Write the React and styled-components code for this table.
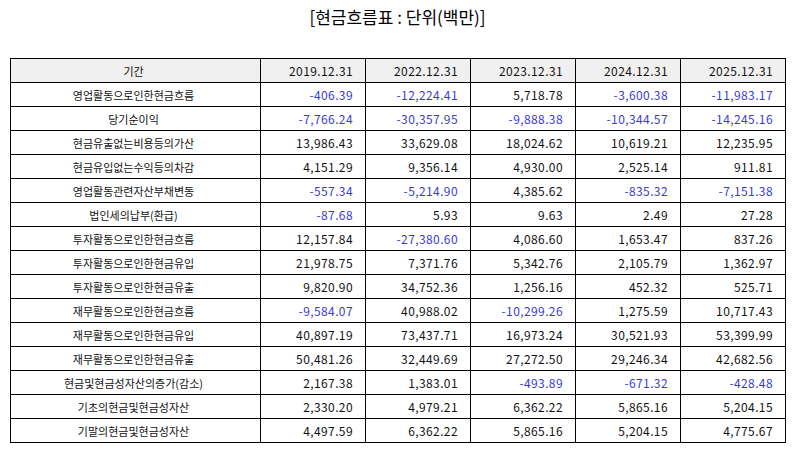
import React from "react";
import styled, { createGlobalStyle } from "styled-components";

const GlobalStyle = createGlobalStyle`
  body {
    margin: 0;
    background: #fff;
    font-family: "Noto Sans CJK KR", "Noto Sans", sans-serif;
  }
`;

const Page = styled.div`
  width: 794px;
  height: 452px;
  padding: 5px 9px 0 10px;
  box-sizing: border-box;
`;

const Title = styled.h2`
  margin: 0;
  height: 53px;
  text-align: center;
  font-size: 17px;
  font-weight: normal;
  color: #000;
  line-height: 24px;
`;

const Table = styled.table`
  width: 775px;
  border-collapse: collapse;
  table-layout: fixed;
  font-size: 11px;
  color: #111;
`;

const Col = styled.col`
  width: ${(p) => (p.$label ? "250px" : "105px")};
`;

const HeadCell = styled.th`
  box-sizing: border-box;
  height: 24px;
  padding: 0 12px 0 8px;
  border: 1px solid #000;
  background: #f0f0f0;
  font-weight: normal;
  text-align: ${(p) => (p.$label ? "center" : "right")};
  font-size: ${(p) => (p.$label ? "11px" : "12px")};
  letter-spacing: ${(p) => (p.$label ? "0" : "0.4px")};
`;

const Cell = styled.td`
  box-sizing: border-box;
  height: 24px;
  padding: 0 12px 0 8px;
  border: 1px solid #000;
  white-space: nowrap;
  text-align: ${(p) => (p.$label ? "center" : "right")};
  font-size: ${(p) => (p.$label ? "11px" : "12px")};
  letter-spacing: ${(p) => (p.$label ? "0" : "0.4px")};
  color: ${(p) => (p.$neg ? "#3a3ad6" : "#111")};
`;

const years = ["2019.12.31", "2022.12.31", "2023.12.31", "2024.12.31", "2025.12.31"];

const rows = [
  ["영업활동으로인한현금흐름", "-406.39", "-12,224.41", "5,718.78", "-3,600.38", "-11,983.17"],
  ["당기순이익", "-7,766.24", "-30,357.95", "-9,888.38", "-10,344.57", "-14,245.16"],
  ["현금유출없는비용등의가산", "13,986.43", "33,629.08", "18,024.62", "10,619.21", "12,235.95"],
  ["현금유입없는수익등의차감", "4,151.29", "9,356.14", "4,930.00", "2,525.14", "911.81"],
  ["영업활동관련자산부채변동", "-557.34", "-5,214.90", "4,385.62", "-835.32", "-7,151.38"],
  ["법인세의납부(환급)", "-87.68", "5.93", "9.63", "2.49", "27.28"],
  ["투자활동으로인한현금흐름", "12,157.84", "-27,380.60", "4,086.60", "1,653.47", "837.26"],
  ["투자활동으로인한현금유입", "21,978.75", "7,371.76", "5,342.76", "2,105.79", "1,362.97"],
  ["투자활동으로인한현금유출", "9,820.90", "34,752.36", "1,256.16", "452.32", "525.71"],
  ["재무활동으로인한현금흐름", "-9,584.07", "40,988.02", "-10,299.26", "1,275.59", "10,717.43"],
  ["재무활동으로인한현금유입", "40,897.19", "73,437.71", "16,973.24", "30,521.93", "53,399.99"],
  ["재무활동으로인한현금유출", "50,481.26", "32,449.69", "27,272.50", "29,246.34", "42,682.56"],
  ["현금및현금성자산의증가(감소)", "2,167.38", "1,383.01", "-493.89", "-671.32", "-428.48"],
  ["기초의현금및현금성자산", "2,330.20", "4,979.21", "6,362.22", "5,865.16", "5,204.15"],
  ["기말의현금및현금성자산", "4,497.59", "6,362.22", "5,865.16", "5,204.15", "4,775.67"],
];

export default function App() {
  return (
    <Page>
      <GlobalStyle />
      <Title>[현금흐름표 : 단위(백만)]</Title>
      <Table>
        <colgroup>
          <Col $label />
          {years.map((y) => (
            <Col key={y} />
          ))}
        </colgroup>
        <thead>
          <tr>
            <HeadCell $label>기간</HeadCell>
            {years.map((y) => (
              <HeadCell key={y}>{y}</HeadCell>
            ))}
          </tr>
        </thead>
        <tbody>
          {rows.map(([label, ...vals]) => (
            <tr key={label}>
              <Cell $label>{label}</Cell>
              {vals.map((v, i) => (
                <Cell key={i} $neg={v.startsWith("-")}>
                  {v}
                </Cell>
              ))}
            </tr>
          ))}
        </tbody>
      </Table>
    </Page>
  );
}
